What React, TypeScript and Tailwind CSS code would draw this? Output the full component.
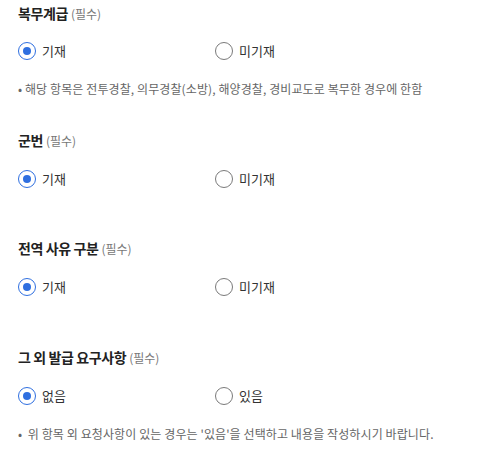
const font = { fontFamily: '"Noto Sans CJK KR", "Noto Sans", sans-serif' }

function Radio({ label, checked }: { label: string; checked: boolean }) {
  return (
    <label className="flex items-center h-5 gap-[6px] cursor-pointer">
      <span
        className={
          checked
            ? 'w-[18px] h-[18px] rounded-full border-[1.5px] border-[#2f6fe0] flex items-center justify-center'
            : 'w-[18px] h-[18px] rounded-full border-[1.5px] border-[#7a7a7a]'
        }
      >
        {checked && <span className="w-2 h-2 rounded-full bg-[#2f6fe0]" />}
      </span>
      <span className="text-[13px] text-[#333]">{label}</span>
    </label>
  )
}

function RadioRow({ options, checked }: { options: [string, string]; checked: number }) {
  return (
    <div className="grid grid-cols-[197px_1fr] h-5">
      {options.map((o, i) => (
        <Radio key={o} label={o} checked={i === checked} />
      ))}
    </div>
  )
}

function Title({ text }: { text: string }) {
  return (
    <div className="flex items-baseline h-5 leading-5 gap-[3px]">
      <span className="text-[14px] font-bold text-[#222] tracking-[-0.4px]">{text}</span>
      <span className="text-[12px] text-[#777]">(필수)</span>
    </div>
  )
}

function Note({ children }: { children: string }) {
  return (
    <p className="h-5 leading-5 text-[12px] text-[#666] tracking-[0.1px] whitespace-pre">{children}</p>
  )
}

export default function App() {
  return (
    <div className="min-h-screen bg-white px-[18px] pt-[3px]" style={font}>
      <Title text="복무계급" />
      <div className="mt-[18px]">
        <RadioRow options={['기재', '미기재']} checked={0} />
      </div>
      <div className="mt-[18px]">
        <Note>• 해당 항목은 전투경찰, 의무경찰(소방), 해양경찰, 경비교도로 복무한 경우에 한함</Note>
      </div>

      <div className="mt-[31px]">
        <Title text="군번" />
      </div>
      <div className="mt-[19px]">
        <RadioRow options={['기재', '미기재']} checked={0} />
      </div>

      <div className="mt-[49px]">
        <Title text="전역 사유 구분" />
      </div>
      <div className="mt-[19px]">
        <RadioRow options={['기재', '미기재']} checked={0} />
      </div>

      <div className="mt-[50px]">
        <Title text="그 외 발급 요구사항" />
      </div>
      <div className="mt-[19px]">
        <RadioRow options={['없음', '있음']} checked={0} />
      </div>
      <div className="mt-[18px]">
        <Note>•  위 항목 외 요청사항이 있는 경우는 '있음'을 선택하고 내용을 작성하시기 바랍니다.</Note>
      </div>
    </div>
  )
}
